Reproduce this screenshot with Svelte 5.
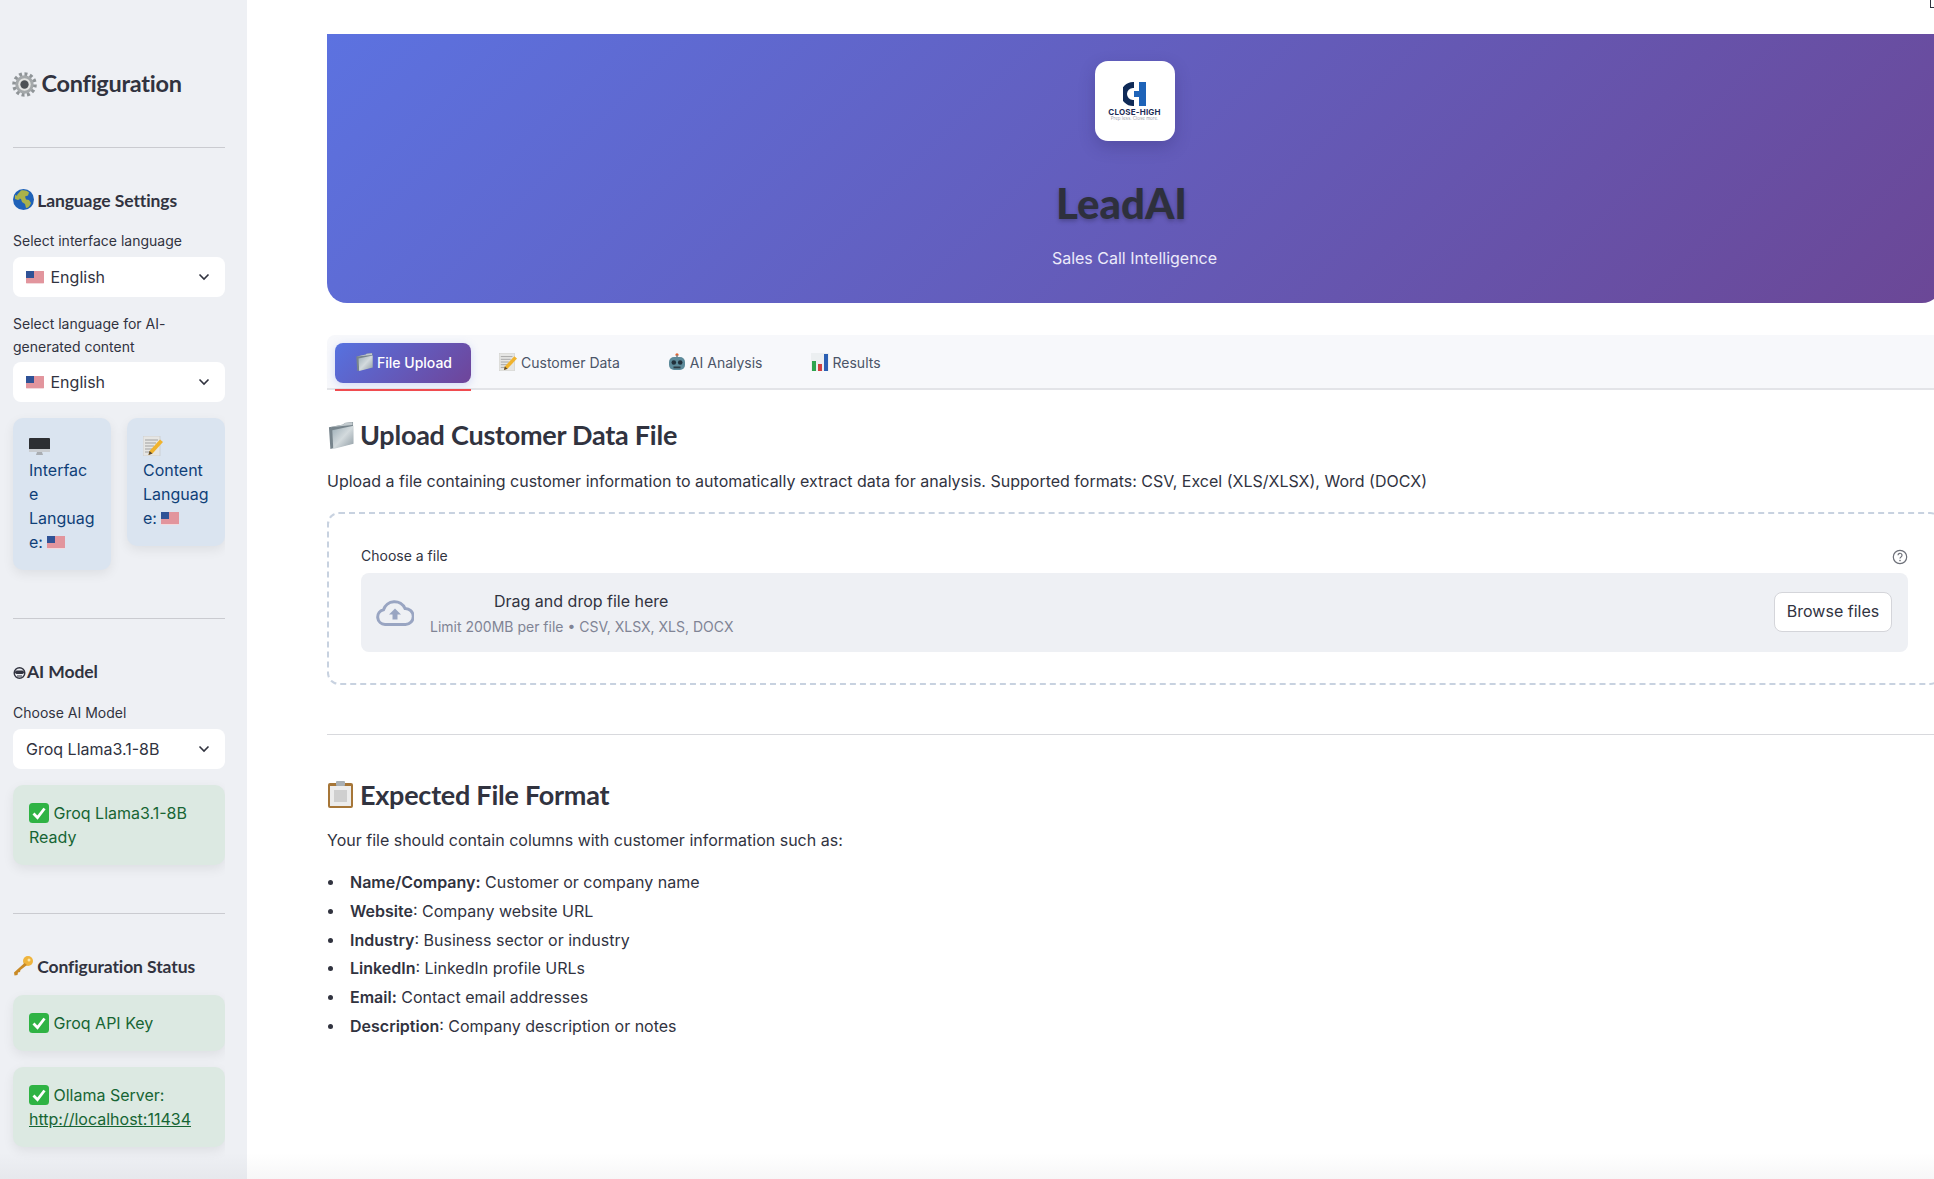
<script>
  const statusItems = [
    ['Name/Company', 'Customer or company name', true],
    ['Website', 'Company website URL', false],
    ['Industry', 'Business sector or industry', false],
    ['LinkedIn', 'LinkedIn profile URLs', false],
    ['Email', 'Contact email addresses', true],
    ['Description', 'Company description or notes', false]
  ];
</script>

{#snippet flag()}
  <svg class="flag" viewBox="0 0 18 13" aria-hidden="true">
    <rect width="18" height="13" rx="1" fill="#f3d9dc"/>
    <path d="M0 1h18M0 3h18M0 5h18M0 7h18M0 9h18M0 11h18" stroke="#d2535f" stroke-width="1.1"/>
    <rect width="8" height="7" fill="#2f5296"/>
  </svg>
{/snippet}

{#snippet check()}
  <svg class="check" viewBox="0 0 20 20" aria-hidden="true">
    <rect width="20" height="20" rx="3.5" fill="#2fb344"/>
    <path d="M4.5 10.5l4 4.2 7-9.2" fill="none" stroke="#fff" stroke-width="2.8"/>
  </svg>
{/snippet}

{#snippet folder(w, h)}
  <svg class="i" width={w} height={h} viewBox="0 0 28 28" aria-hidden="true">
    <defs><linearGradient id="fg" x1="0" y1="0" x2="1" y2="1"><stop offset="0" stop-color="#9cadb6"/><stop offset=".5" stop-color="#d3dadd"/><stop offset="1" stop-color="#8d9aa2"/></linearGradient></defs>
    <path d="M2 5.500l15-3 1-1.500 9-1v22L3.500 28z" fill="#77848c"/>
    <path d="M3 5.500l14-3 1-1.500 8.500-.7V3z" fill="#c2cace"/>
    <path d="M5.500 8.500L27.500 4v18.500L6.500 28z" fill="url(#fg)"/>
  </svg>
{/snippet}

{#snippet memo(s)}
  <svg class="i" width={s} height={s} viewBox="0 0 20 20" aria-hidden="true">
    <rect x="0" y="0" width="17" height="20" fill="#e6e6e4" stroke="#c4c4c1" stroke-width=".6"/>
    <path d="M2 4h13M2 7h11M2 10h9M2 13h7M2 16h5" stroke="#a0a0a0" stroke-width="1"/>
    <path d="M17 3.500l3 2.500L9.500 17.500 5.500 19l1-4z" fill="#f0b32e"/>
    <path d="M5.500 19l1-4 3 2.500z" fill="#5c4a33"/>
  </svg>
{/snippet}

<div class="page">
  <aside class="sidebar">
    <div class="side-inner">
      <h2 class="side-title">
        <svg class="i gear" width="25" height="25" viewBox="0 0 24 24" aria-hidden="true">
          <circle cx="12" cy="12" r="10" fill="none" stroke="#8f9497" stroke-width="3.600" stroke-dasharray="2.800 2.400"/>
          <circle cx="12" cy="12" r="8.800" fill="#a4a8aa"/>
          <circle cx="12" cy="12" r="6" fill="#e3e4e2" />
          <circle cx="12" cy="12" r="4" fill="#4d5154"/>
        </svg>
        Configuration
      </h2>
      <hr class="rule first" />

      <h3 class="side-head">
        <svg class="i" width="21" height="21" viewBox="0 0 21 21" aria-hidden="true">
          <circle cx="10.500" cy="10.500" r="10.500" fill="#1f62b8"/>
          <path d="M8 1.500c3-.8 6 0 8 2l-1 3-3 1 1 3 3 .5 2 3c-1 3-3 5-5 5l-1-4-3-2-1-3-3-1-1-3z" fill="#a9b24a"/>
          <path d="M2 6l3 1 2 3-2 1-3-1z" fill="#a9b24a"/>
        </svg>
        Language Settings
      </h3>
      <p class="lbl first-lbl">Select interface language</p>
      <div class="select"><span>{@render flag()} English</span><svg class="chev" width="12" height="8" viewBox="0 0 12 8" aria-hidden="true"><path d="M1.500 1.500L6 6l4.500-4.500" fill="none" stroke="#31333f" stroke-width="1.600"/></svg></div>
      <p class="lbl gap">Select language for AI-generated content</p>
      <div class="select"><span>{@render flag()} English</span><svg class="chev" width="12" height="8" viewBox="0 0 12 8" aria-hidden="true"><path d="M1.500 1.500L6 6l4.500-4.500" fill="none" stroke="#31333f" stroke-width="1.600"/></svg></div>

      <div class="cards">
        <div class="note blue">
          <svg class="i mon" width="21" height="18" viewBox="0 0 21 18" aria-hidden="true">
            <rect x="0" y="0" width="21" height="13" rx="1" fill="#2d2f33"/>
            <rect x="0" y="11" width="21" height="3" fill="#c9ccd0"/>
            <path d="M8 14h5l1 3H7z" fill="#a9adb2"/>
          </svg>
          Interface Language: {@render flag()}
        </div>
        <div class="note blue">
          <span class="memo-wrap">{@render memo(20)}</span> Content Language: {@render flag()}
        </div>
      </div>
      <hr class="rule" />

      <h3 class="side-head">
        <span class="botglyph" aria-hidden="true"><svg width="13" height="12" viewBox="0 0 13 12"><circle cx="6.500" cy="6" r="5.300" fill="none" stroke="#31333f" stroke-width="1.400"/><rect x="2" y="3.500" width="9" height="3.500" rx="1.700" fill="#31333f"/><path d="M4 9h5" stroke="#31333f"/></svg></span>AI Model
      </h3>
      <p class="lbl">Choose AI Model</p>
      <div class="select"><span>Groq Llama3.1-8B</span><svg class="chev" width="12" height="8" viewBox="0 0 12 8" aria-hidden="true"><path d="M1.500 1.500L6 6l4.500-4.500" fill="none" stroke="#31333f" stroke-width="1.600"/></svg></div>
      <div class="note green top">{@render check()} Groq Llama3.1-8B Ready</div>
      <hr class="rule" />

      <h3 class="side-head">
        <svg class="i" width="21" height="21" viewBox="0 0 21 21" aria-hidden="true">
          <circle cx="15" cy="6" r="5" fill="#efb43c"/>
          <circle cx="16" cy="5" r="1.500" fill="#fbe7a9"/>
          <path d="M11.500 8L1 17.500 1.500 20.500l3-.5.5-2.500 2-.5.500-2 6.500-5z" fill="#c98a26"/>
        </svg>
        Configuration Status
      </h3>
      <div class="note green tight">{@render check()} Groq API Key</div>
      <div class="note green top">{@render check()} Ollama Server: <span class="link">http://localhost:11434</span></div>
    </div>
  </aside>

  <main class="main">
    <span class="corner"></span>
    <div class="content">
      <header class="hero">
        <div class="logo">
          <svg width="24" height="24" viewBox="0 0 24 24" aria-hidden="true">
            <path d="M11 0v6h-1a6 6 0 0 0 0 12h1v6h-1a12 12 0 0 1 0-24z" fill="#0f2a57"/>
            <path d="M16 0h7v24h-7v-9h-5V9h5z" fill="#1e63b8"/>
          </svg>
          <span class="logo-name">CLOSE-HIGH</span>
          <span class="logo-tag">Prep less. Close more.</span>
        </div>
        <h1>LeadAI</h1>
        <p>Sales Call Intelligence</p>
      </header>

      <nav class="tabs">
        <div class="tab active">{@render folder(18, 18)} File Upload</div>
        <div class="tab">{@render memo(18)} Customer Data</div>
        <div class="tab">
          <svg class="i" width="18" height="18" viewBox="0 0 18 18" aria-hidden="true">
            <circle cx="9" cy="1.800" r="1.600" fill="#e0622f"/>
            <path d="M8.200 2h1.600v3H8.200z" fill="#7f8d96"/>
            <rect x="1" y="4" width="16" height="13" rx="5" fill="#5d8a9a"/>
            <circle cx="5.800" cy="9.500" r="2.300" fill="#22303c"/><circle cx="12.200" cy="9.500" r="2.300" fill="#22303c"/>
            <rect x="5.500" y="13.500" width="7" height="1.800" fill="#2d3b45"/>
          </svg>
          AI Analysis
        </div>
        <div class="tab">
          <svg class="i" width="18" height="18" viewBox="0 0 18 18" aria-hidden="true">
            <rect width="18" height="18" fill="#eceff1"/>
            <rect x="1" y="8" width="4" height="10" fill="#2da44e"/>
            <rect x="7" y="11" width="4" height="7" fill="#d23f3f"/>
            <rect x="13" y="1" width="4" height="17" fill="#2b5fb3"/>
          </svg>
          Results
        </div>
      </nav>

      <h2 class="title">{@render folder(27, 27)} <span>Upload Customer Data File</span></h2>
      <p class="body">Upload a file containing customer information to automatically extract data for analysis. Supported formats: CSV, Excel (XLS/XLSX), Word (DOCX)</p>

      <section class="upload">
        <div class="up-head">
          <span>Choose a file</span>
          <svg width="16" height="16" viewBox="0 0 16 16" aria-hidden="true">
            <circle cx="8" cy="8" r="6.700" fill="none" stroke="#6d7079" stroke-width="1.200"/>
            <path d="M6 6.300a2 2 0 1 1 3 1.700c-.7.400-1 .8-1 1.500" fill="none" stroke="#6d7079" stroke-width="1.200"/>
            <circle cx="8" cy="11.600" r=".8" fill="#6d7079"/>
          </svg>
        </div>
        <div class="drop">
          <svg class="cloud" width="38" height="26" viewBox="0 0 38 26" aria-hidden="true">
            <path d="M9 24.500A7.500 7.500 0 0 1 7.500 9.700 11.500 11.500 0 0 1 29 8.500 8 8 0 0 1 29.500 24.500z" fill="none" stroke="#99a5c2" stroke-width="3"/>
            <path d="M19 8.500l6 6h-3.500v5h-5v-5H13z" fill="#99a5c2"/>
          </svg>
          <div class="drop-text">
            <span class="drag">Drag and drop file here</span>
            <span class="limit">Limit 200MB per file • CSV, XLSX, XLS, DOCX</span>
          </div>
          <button class="browse" type="button">Browse files</button>
        </div>
      </section>

      <hr class="split" />

      <h2 class="title second">
        <svg class="i" width="27" height="28" viewBox="0 0 27 28" aria-hidden="true">
          <rect x="1" y="2" width="25" height="25" rx="2" fill="#a67638"/>
          <rect x="3" y="5" width="21" height="20" fill="#ececec"/>
          <rect x="7" y="9" width="13" height="12" fill="#cfcfcf"/>
          <rect x="9" y="0" width="9" height="5" rx="1" fill="#a9b0b5"/>
        </svg>
        <span>Expected File Format</span>
      </h2>
      <p class="body">Your file should contain columns with customer information such as:</p>
      <ul class="list">
        {#each statusItems as [key, value, inside]}
          <li><b>{key}{inside ? ':' : ''}</b>{inside ? '' : ':'} {value}</li>
        {/each}
      </ul>
    </div>
  </main>
</div>

<style>
  :global(body) {
    margin: 0;
    background: #fff;
    overflow: hidden;
  }
  .page {
    position: relative;
    display: flex;
    width: 1934px;
    height: 1179px;
    overflow: hidden;
    font-family: Inter, "Liberation Sans", sans-serif;
    color: #31333f;
  }
  .page::after {
    content: "";
    position: absolute;
    left: 0;
    right: 0;
    bottom: 0;
    height: 26px;
    background: linear-gradient(rgba(40, 40, 60, 0), rgba(40, 40, 60, .04));
    pointer-events: none;
  }
  .sidebar {
    flex: 0 0 247px;
    height: 1179px;
    background: #eef0f4;
    padding: 0 22px 0 13px;
    box-sizing: border-box;
  }
  .side-inner { clip-path: inset(-30px 0 -40px -13px); }
  .i { vertical-align: -3px; }
  .side-title {
    margin: 0;
    padding-top: 65px;
    font: 700 23.500px/36px Lato, sans-serif;
    letter-spacing: -.27px;
    white-space: nowrap;
  }
  .gear { vertical-align: -5px; margin: 0 -1px 0 -1px; }
  .rule { border: 0; border-top: 1px solid #cacbd0; margin: 48px 0 0; }
  .rule.first { margin-top: 46px; }
  .side-head {
    margin: 40px 0 0;
    padding-bottom: 1px;
    font: 700 17.500px/26px Lato, sans-serif;
    letter-spacing: -.1px;
    white-space: nowrap;
  }
  .side-head > .i { margin-right: -1px; }
  .botglyph { display: inline-block; margin-right: 1px; }
  .botglyph svg { vertical-align: -1px; }
  .lbl { margin: 15px 0 5px; font-size: 14px; line-height: 23px; }
  .lbl.first-lbl { margin: 14px 0 5px; }
  .lbl.gap { margin: 15px 0 4px; }
  .select {
    height: 40px;
    background: #fff;
    border-radius: 8px;
    display: flex;
    align-items: center;
    justify-content: space-between;
    padding: 0 15px 0 13px;
    font-size: 16px;
  }
  .flag { width: 18px; height: 13px; vertical-align: -1px; margin-right: 2px; }
  .note .flag { margin-right: 0; }
  .cards { display: flex; align-items: flex-start; gap: 16px; margin-top: 16px; }
  .note {
    padding: 16px;
    border-radius: 10px;
    font-size: 16px;
    line-height: 24px;
    overflow-wrap: anywhere;
    box-shadow: 0 4px 12px rgba(0, 0, 0, .07);
  }
  .cards .note { flex: 0 0 98px; box-sizing: border-box; }
  .blue { background: #dae4f0; color: #0f3f78; }
  .green { background: #dce9e2; color: #176534; }
  .top { margin-top: 16px; }
  .tight { margin-top: 14px; }
  .check { width: 20px; height: 20px; vertical-align: -4px; }
  .link { text-decoration: underline; }
  .mon { vertical-align: -4px; }
  .memo-wrap :global(svg) { vertical-align: -4px; }

  .main { flex: 1 1 auto; min-width: 0; position: relative; padding-left: 80px; }
  .corner {
    position: absolute;
    left: 1683px;
    top: -4px;
    width: 6px;
    height: 11px;
    border-left: 1px solid #31333f;
    border-bottom: 1px solid #31333f;
  }
  .content { width: 1615px; }
  .hero {
    margin-top: 34px;
    height: 269px;
    border-radius: 0 0 20px 20px;
    background: linear-gradient(135deg, #5c72e0 0%, #6b4796 100%);
    text-align: center;
    overflow: hidden;
  }
  .logo {
    width: 80px;
    height: 80px;
    margin: 27px auto 0;
    background: #fff;
    border-radius: 13px;
    box-shadow: 0 6px 16px rgba(40, 30, 90, .25);
    display: flex;
    flex-direction: column;
    align-items: center;
    padding-top: 21px;
    box-sizing: border-box;
  }
  .logo-name { font: 700 8px/8px Inter, sans-serif; letter-spacing: .2px; color: #1c2c55; margin-top: 2px; white-space: nowrap; }
  .logo-tag { font: 400 4.500px/6px Inter, sans-serif; color: #a3a6b0; white-space: nowrap; }
  .hero h1 {
    margin: 33px 26px 0 0;
    font: 900 42px/58px Lato, sans-serif;
    color: #2e303d;
    text-shadow: 0 2px 4px rgba(0, 0, 0, .25);
  }
  .hero p { margin: 14px 0 0; font-size: 16px; line-height: 24px; color: #eceafa; }

  .tabs {
    margin-top: 32px;
    height: 55px;
    box-sizing: border-box;
    background: #f7f8fb;
    border-bottom: 2px solid #e3e4e8;
    border-radius: 8px 8px 0 0;
    display: flex;
    align-items: flex-start;
    gap: 8px;
    padding: 8px 8px 0;
  }
  .tab {
    height: 40px;
    box-sizing: border-box;
    padding: 0 20px 2px;
    border-radius: 8px;
    display: flex;
    align-items: center;
    gap: 4px;
    font-size: 14px;
    font-weight: 400;
    color: #4b5568;
    white-space: nowrap;
  }
  .tab .i { vertical-align: 0; }
  .tab.active {
    position: relative;
    color: #fff;
    font-weight: 500;
    padding-right: 19px;
    background: linear-gradient(135deg, #5672e0, #6f4499);
    box-shadow: 0 2px 8px rgba(102, 126, 234, .25);
  }
  .tab.active::after {
    content: "";
    position: absolute;
    left: 0;
    right: 0;
    top: 46px;
    height: 2px;
    background: #f04b4f;
  }

  .title {
    margin: 25px 0 0;
    padding-bottom: 1px;
    font: 700 27px/40px Lato, sans-serif;
    letter-spacing: -.25px;
    display: flex;
    align-items: center;
    gap: 6px;
  }
  .title.second { margin-top: 40px; padding-bottom: 0; }
  .body { margin: 12px 0 0; font-size: 16px; line-height: 26px; white-space: nowrap; }

  .upload {
    margin-top: 18px;
    box-sizing: border-box;
    height: 173px;
    border: 2px dashed #c8d2e0;
    border-radius: 12px;
    padding: 32px;
  }
  .up-head {
    display: flex;
    justify-content: space-between;
    align-items: center;
    font-size: 14px;
    line-height: 20px;
  }
  .up-head svg { position: relative; top: 1px; }
  .drop {
    margin-top: 7px;
    height: 79px;
    background: #eef0f4;
    border-radius: 8px;
    display: flex;
    align-items: center;
    padding: 0 16px 0 15px;
  }
  .cloud { flex: none; }
  .drop-text { display: flex; flex-direction: column; margin-left: 16px; flex: 1; }
  .drag { font-size: 16px; line-height: 24px; margin-left: 64px; }
  .limit { font-size: 14px; line-height: 20px; color: #808495; margin-top: 4px; }
  .browse {
    height: 40px;
    width: 118px;
    margin-bottom: 2px;
    background: #fff;
    border: 1px solid #d4d5da;
    border-radius: 8px;
    font: 400 16px Inter, sans-serif;
    color: #31333f;
    padding: 0 0 2px;
  }
  .split { border: 0; border-top: 1px solid #d8d9dd; margin: 49px 0 0; }

  .list { list-style: none; margin: 16px 0 0; padding: 0 0 0 23px; }
  .list li { position: relative; font-size: 16px; line-height: 26px; margin-bottom: 2.800px; }
  .list li::before {
    content: "";
    position: absolute;
    left: -22px;
    top: 11px;
    width: 5px;
    height: 5px;
    border-radius: 50%;
    background: #31333f;
  }
  .list b { font-weight: 600; }
</style>
